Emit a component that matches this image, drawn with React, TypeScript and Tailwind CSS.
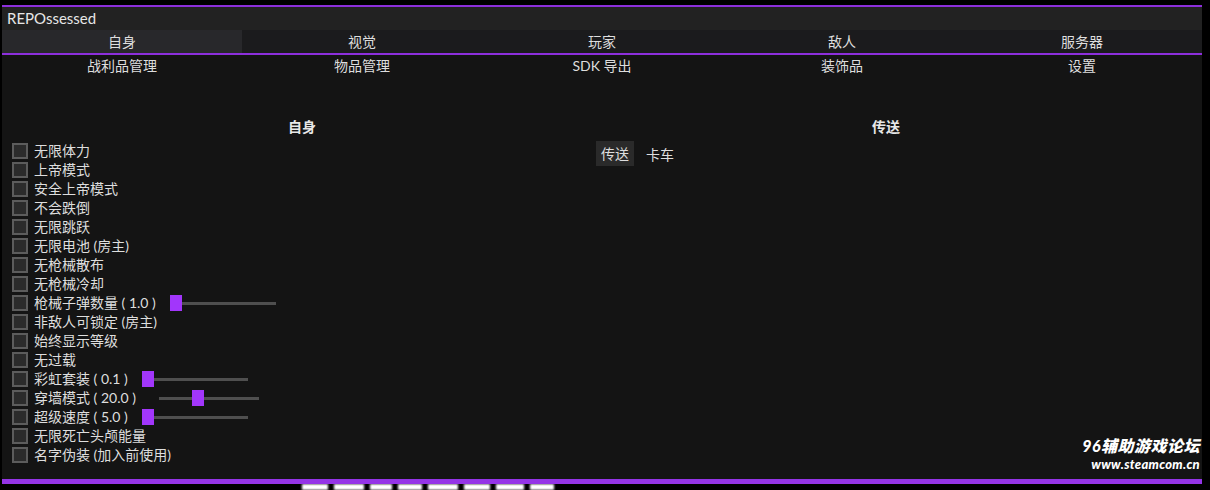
import clsx from 'clsx';

const TOP_TABS = ['自身', '视觉', '玩家', '敌人', '服务器'];
const SUB_TABS = ['战利品管理', '物品管理', 'SDK 导出', '装饰品', '设置'];

type Toggle = {
  label: string;
  slider?: { offset: string; width: string; pos: number };
};

// features listed under the 自身 section, some with a value slider
const SELF_TOGGLES: Toggle[] = [
  { label: '无限体力' },
  { label: '上帝模式' },
  { label: '安全上帝模式' },
  { label: '不会跌倒' },
  { label: '无限跳跃' },
  { label: '无限电池 (房主)' },
  { label: '无枪械散布' },
  { label: '无枪械冷却' },
  { label: '枪械子弹数量 ( 1.0 )', slider: { offset: 'ml-[14px]', width: 'w-[106px]', pos: 0 } },
  { label: '非敌人可锁定 (房主)' },
  { label: '始终显示等级' },
  { label: '无过载' },
  { label: '彩虹套装 ( 0.1 )', slider: { offset: 'ml-[14px]', width: 'w-[106px]', pos: 0 } },
  { label: '穿墙模式 ( 20.0 )', slider: { offset: 'ml-[23px]', width: 'w-[100px]', pos: 0.375 } },
  { label: '超级速度 ( 5.0 )', slider: { offset: 'ml-[14px]', width: 'w-[106px]', pos: 0 } },
  { label: '无限死亡头颅能量' },
  { label: '名字伪装 (加入前使用)' },
];

function Checkbox() {
  return <span className="w-4 h-4 shrink-0 border-2 border-[#5c5c5c] bg-[#2b2b2b]" />;
}

function Slider({ offset, width, pos }: { offset: string; width: string; pos: number }) {
  return (
    <div className={clsx('relative h-4 flex items-center', offset, width)}>
      <div className="w-full h-[3px] bg-[#4f4f4f]" />
      {/* thumb slides along the track */}
      <div
        className="absolute top-0 w-3 h-4 bg-[#a236fb]"
        style={{ left: `calc(${pos} * (100% - 12px))` }}
      />
    </div>
  );
}

export default function App() {
  return (
    <div
      className="w-[1210px] h-[490px] bg-black overflow-hidden pt-[5px] text-[#dedede]"
      style={{ fontFamily: 'Lato, "Noto Sans CJK SC", sans-serif' }}
    >
      <div className="ml-[2px] w-[1200px] flex flex-col">
        <div className="h-[2px] bg-[#8d2fdc]" />

        {/* title bar */}
        <div className="h-[23px] bg-[#222222] flex items-center pl-[5px] text-[15px] text-[#e6e6e6]">
          REPOssessed
        </div>

        {/* main tabs */}
        <div className="h-[23px] bg-[#1b1b1d] grid grid-cols-5 text-[14px]">
          {TOP_TABS.map((t, i) => (
            <div
              key={t}
              className={clsx('flex items-center justify-center', i === 0 && 'bg-[#28282b]')}
            >
              {t}
            </div>
          ))}
        </div>
        <div className="h-[2px] bg-[#8d2fdc]" />

        {/* sub tabs */}
        <div className="h-[21px] bg-[#141414] grid grid-cols-5 text-[14px]">
          {SUB_TABS.map((t) => (
            <div key={t} className="flex items-center justify-center">
              {t}
            </div>
          ))}
        </div>

        {/* content */}
        <div className="relative h-[403px] bg-[#141414] pt-[40px] pl-[10px] pr-[26px] grid grid-cols-2 gap-[4px] text-[14px]">
          <div className="flex flex-col">
            <div className="h-5 flex items-center justify-center font-bold text-[#e8e8e8]">自身</div>
            <div className="mt-[7px] flex flex-col gap-[3px]">
              {SELF_TOGGLES.map((item) => (
                <div key={item.label} className="h-4 flex items-center">
                  <Checkbox />
                  <span className="ml-[6px] leading-4 whitespace-pre">{item.label}</span>
                  {item.slider && <Slider {...item.slider} />}
                </div>
              ))}
            </div>
          </div>

          <div className="flex flex-col">
            <div className="h-5 flex items-center justify-center font-bold text-[#e8e8e8]">传送</div>
            <div className="mt-[5px] flex items-center gap-[12px]">
              <button className="h-[25px] px-[5px] bg-[#2a2a2a] text-[14px] text-[#dedede]">传送</button>
              <span className="mt-[2px]">卡车</span>
            </div>
          </div>

          {/* forum watermark */}
          <div className="absolute right-[2px] top-[360px] flex flex-col items-end italic font-black text-white">
            <span className="text-[16px] leading-[19px] tracking-[0.5px]">96辅助游戏论坛</span>
            <span className="mt-[1px] text-[13px] leading-[16px] tracking-[0.3px]">www.steamcom.cn</span>
          </div>
        </div>

        <div className="h-[5px] bg-[#9434e6]" />
      </div>

      {/* game backdrop showing under the window */}
      <div className="relative h-[6px] overflow-hidden" aria-hidden="true">
        <div className="absolute left-[302px] top-0 flex gap-[6px]">
          {[26, 30, 22, 24, 30, 26, 28, 24].map((w, i) => (
            <span key={i} className="h-[6px] bg-white blur-[1px]" style={{ width: w }} />
          ))}
        </div>
      </div>
    </div>
  );
}
